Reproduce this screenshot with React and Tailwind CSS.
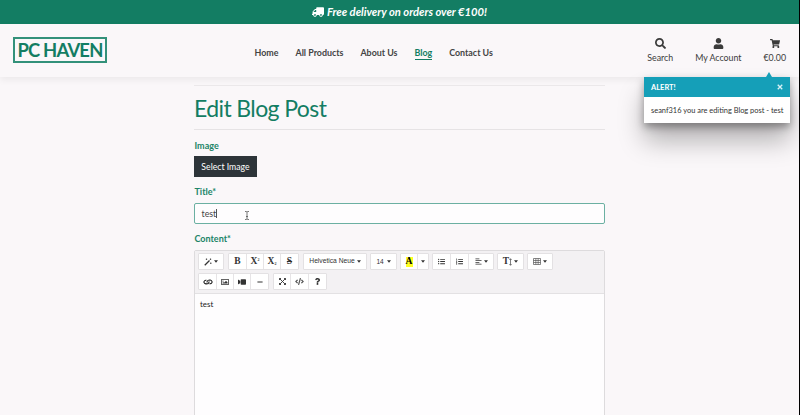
import React from 'react';
import { FaTruck, FaSearch, FaUser, FaShoppingCart, FaListUl, FaListOl, FaAlignLeft, FaLink, FaRegImage, FaVideo, FaMinus, FaCode, FaQuestion } from 'react-icons/fa';

const Caret = () => (
  <svg className="ml-[2px] h-[3px] w-[4px] shrink-0" viewBox="0 0 8 6"><path d="M0 .5h8L4 5.500z" fill="#333" /></svg>
);

const Group = ({ children }) => (
  <div className="flex h-[17px] shrink-0 divide-x divide-[#e6e4e6] rounded-[1px] border border-[#e3e1e3] bg-white">{children}</div>
);

const Btn = ({ w, children }) => (
  <button type="button" className={`flex items-center justify-center text-[#333] ${w}`}>{children}</button>
);

const Glyph = ({ children }) => <b className="font-['Liberation_Serif',serif] text-[9.5px] leading-none">{children}</b>;

const Wand = () => (
  <svg className="size-[8px]" viewBox="0 0 16 16" fill="none" stroke="#333" strokeWidth="2">
    <path d="M1.5 14.5L11 5" strokeWidth="2.6" />
    <path d="M5 1v3M3.5 2.5h3M13 1v3M11.5 2.5h3M13.5 9v3M12 10.500h3" strokeWidth="1.3" />
  </svg>
);

const TextHeight = () => (
  <svg className="h-[8px] w-[3px]" viewBox="0 0 6 16" fill="none" stroke="#555" strokeWidth="1.5"><path d="M3 1.500v13M.8 4L3 1.500 5.200 4M.8 12L3 14.500 5.200 12" /></svg>
);

const Expand = () => (
  <svg className="size-[7px]" viewBox="0 0 14 14" fill="none" stroke="#333" strokeWidth="1.8">
    <path d="M1 4V1h3M10 1h3v3M13 10v3h-3M4 13H1v-3M1 1l12 12M13 1L1 13" />
  </svg>
);

function Banner() {
  return (
    <div className="flex h-6 items-center justify-center gap-[3px] bg-[#137d63] text-white">
      <FaTruck className="size-3 -scale-x-100" />
      <span className="whitespace-nowrap text-[11.2px] font-bold italic leading-none">Free delivery on orders over €100!</span>
    </div>
  );
}

function Header() {
  return (
    <header className="flex h-[53px] shadow-[0_3px_7px_rgba(0,0,0,0.06)]">
      <div className="ml-[13px] mt-[13px] flex h-[26px] w-[94px] items-center justify-center whitespace-nowrap border-2 border-[#33917a] text-[18.4px] font-bold leading-none tracking-[-0.8px] text-[#137d63]">
        PC HAVEN
      </div>
      <nav className="ml-[147.5px] mt-[23px] flex items-start gap-[17px] whitespace-nowrap text-[8.9px] font-bold leading-[12px] text-[#444]">
        <a>Home</a>
        <a>All Products</a>
        <a>About Us</a>
        <a className="border-b border-[#137d63] text-[#137d63]">Blog</a>
        <a>Contact Us</a>
      </nav>
      <div className="ml-auto mr-[13px] mt-[14px] flex gap-[22px] whitespace-nowrap text-[8.8px] leading-[12px] text-[#3b3b3b]">
        <div className="flex flex-col items-center gap-[3px]"><FaSearch className="size-[11px]" />Search</div>
        <div className="flex flex-col items-center gap-[3px]"><FaUser className="size-[11px]" />My Account</div>
        <div className="flex flex-col items-center gap-[3px]"><FaShoppingCart className="h-[11px] w-[10px]" />€0.00</div>
      </div>
    </header>
  );
}

function Alert() {
  return (
    <div className="absolute left-[644px] top-[77px] w-[146px] bg-white shadow-[0_4px_8px_rgba(0,0,0,0.35),0_18px_26px_rgba(0,0,0,0.28)]">
      <div className="absolute -top-[5px] left-[122px] border-x-[3px] border-b-[5px] border-x-transparent border-b-[#159fb8]" />
      <div className="flex h-5 items-center justify-between bg-[#159fb8] px-[7px] pt-px text-white">
        <span className="pt-px text-[7.5px] font-bold">ALERT!</span>
        <svg className="-mt-px size-[6px]" viewBox="0 0 8 8" stroke="#d9f1f5" strokeWidth="1.8"><path d="M1 1l6 6M7 1L1 7" /></svg>
      </div>
      <div className="flex h-[26px] items-center whitespace-nowrap pl-[7px] pt-[2px] text-[7.45px] text-[#333]">seanf316 you are editing Blog post - test</div>
    </div>
  );
}

function Editor() {
  return (
    <div className="mt-[5px] h-[180px] rounded-[2px] border border-[#dddbdd] bg-[#fefdfe]">
      <div className="flex h-[43px] flex-col gap-[3px] border-b border-[#e3e1e3] bg-[#f3f1f3] pl-[3px] pt-[2px]">
        <div className="flex gap-[3px]">
          <div className="mr-px"><Group><Btn w="w-[24px]"><Wand /><Caret /></Btn></Group></div>
          <div className="mr-px">
            <Group>
              <Btn w="w-[18px]"><Glyph>B</Glyph></Btn>
              <Btn w="w-[17px]"><Glyph>X<span className="relative -top-[3px] text-[4px]">2</span></Glyph></Btn>
              <Btn w="w-[17px]"><Glyph>X<span className="relative top-[1px] text-[4px]">2</span></Glyph></Btn>
              <Btn w="w-[17px]"><span className="flex line-through"><Glyph>S</Glyph></span></Btn>
            </Group>
          </div>
          <Group><Btn w="w-[62px]"><span className="whitespace-nowrap font-['Liberation_Sans',sans-serif] text-[6.7px]">Helvetica Neue</span><Caret /></Btn></Group>
          <Group><Btn w="w-[25px]"><span className="mr-px font-['Liberation_Sans',sans-serif] text-[6.5px]">14</span><Caret /></Btn></Group>
          <Group>
            <Btn w="w-[17px]"><span className="flex h-[10px] w-[7px] items-center justify-center bg-[#ffff22] text-black"><Glyph>A</Glyph></span></Btn>
            <Btn w="w-[10px]"><span className="-ml-[2px] flex"><Caret /></span></Btn>
          </Group>
          <Group>
            <Btn w="w-[18px]"><FaListUl className="size-[7px]" /></Btn>
            <Btn w="w-[18px]"><FaListOl className="size-[7px]" /></Btn>
            <Btn w="w-[24px]"><FaAlignLeft className="size-[7px]" /><Caret /></Btn>
          </Group>
          <Group><Btn w="w-[25px]"><Glyph>T</Glyph><TextHeight /><Caret /></Btn></Group>
          <Group><Btn w="w-[24px]"><svg className="h-[7px] w-[8px]" viewBox="0 0 16 14" fill="none" stroke="#555" strokeWidth="1.4"><path d="M1 1h14v12H1zM1 5h14M1 9h14M5.700 1v12M10.300 1v12" /></svg><Caret /></Btn></Group>
        </div>
        <div className="flex gap-[4px]">
          <Group>
            <Btn w="w-[18px]"><FaLink className="size-[8px] rotate-45" /></Btn>
            <Btn w="w-[17px]"><FaRegImage className="size-[8px]" /></Btn>
            <Btn w="w-[17px]"><FaVideo className="size-[8px] -scale-x-100" /></Btn>
            <Btn w="w-[17px]"><FaMinus className="size-[6px]" /></Btn>
          </Group>
          <Group>
            <Btn w="w-[17px]"><Expand /></Btn>
            <Btn w="w-[18px]"><FaCode className="size-[9px] text-[#555]" /></Btn>
            <Btn w="w-[17px]"><FaQuestion className="size-[7px]" /></Btn>
          </Group>
        </div>
      </div>
      <p className="pl-[5px] pt-[5px] text-[7.9px] leading-[11px] text-[#222]">test</p>
    </div>
  );
}

export default function App() {
  return (
    <div className="relative h-[415px] w-[800px] overflow-hidden border-r border-black bg-[#faf7f9] font-[Lato,sans-serif]">
      <Banner />
      <Header />
      <main className="ml-[194px] mt-[8px] w-[411px] border-t border-[#ebe8ea]">
        <h1 className="h-[44px] border-b border-[#e6e3e5] pt-[8px] text-[23px] leading-[28px] tracking-[-0.6px] text-[#137d63]">Edit Blog Post</h1>
        <div className="pl-[0.5px] pt-[10px] text-[9px] font-bold leading-[12px] text-[#208467]">Image</div>
        <button type="button" className="mt-[4px] flex h-[21px] w-[63px] items-center justify-center whitespace-nowrap bg-[#2d3439] text-[8.7px] text-white">Select Image</button>
        <div className="mt-[9px] pl-[0.5px] text-[9px] font-bold leading-[12px] text-[#208467]">Title*</div>
        <div className="mt-[5px] flex h-[21px] items-center rounded-[2px] border border-[#6bb0a2] bg-[#fefdfe] pl-[6.5px] text-[8.8px] text-[#444]">
          <span>test</span><span className="h-[9px] w-px bg-[#555]" />
          <svg className="ml-[28px] mt-[3px] h-[9px] w-[4px]" viewBox="0 0 4 9" fill="none" stroke="#555" strokeWidth="0.8"><path d="M0 .5h1.3L2 1l.7-.5H4M2 1v7M0 8.5h1.3L2 8l.7.5H4M1 5.500h2" /></svg>
        </div>
        <div className="mt-[9px] pl-[0.5px] text-[9px] font-bold leading-[12px] text-[#208467]">Content*</div>
        <Editor />
      </main>
      <Alert />
    </div>
  );
}
